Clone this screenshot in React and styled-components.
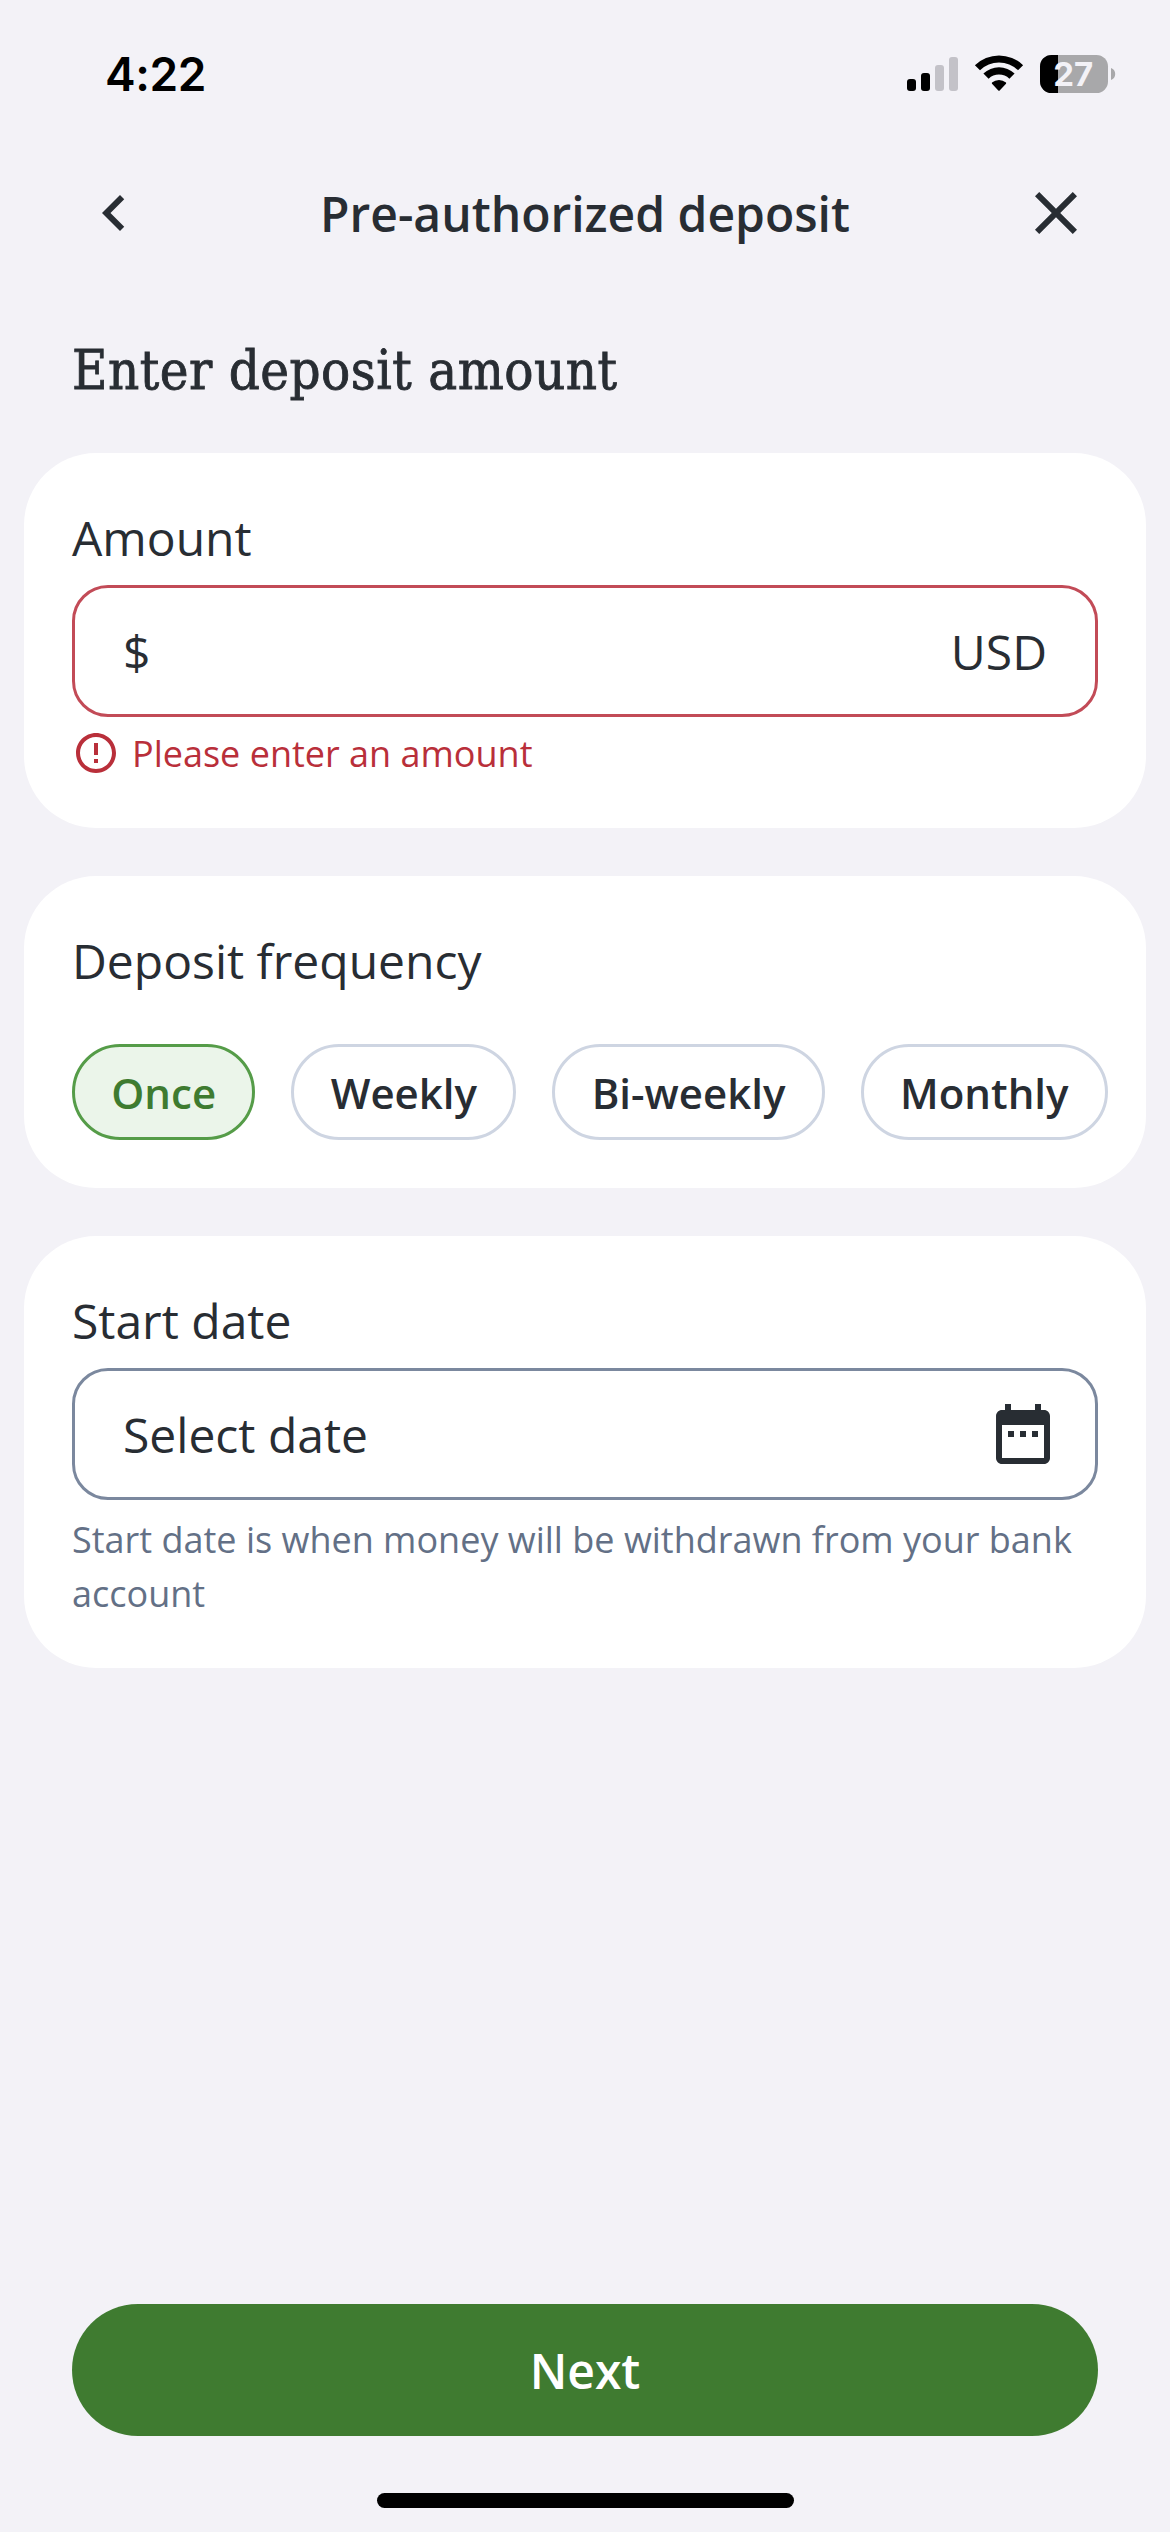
import React, { useState } from "react";
import styled, { createGlobalStyle } from "styled-components";

const GlobalStyle = createGlobalStyle`
  * {
    box-sizing: border-box;
  }
  body {
    margin: 0;
    background-color: #f3f2f7;
  }
  button {
    font-family: inherit;
    margin: 0;
    padding: 0;
    border: none;
    background: none;
    color: inherit;
    cursor: pointer;
  }
`;

const Screen = styled.div`
  width: 1170px;
  height: 2532px;
  display: flex;
  flex-direction: column;
  background-color: #f3f2f7;
  color: #282d33;
  font-family: "Open Sans", sans-serif;
  overflow: hidden;
`;

const StatusBar = styled.div`
  height: 141px;
  padding: 7px 54px 0 105px;
  display: flex;
  align-items: center;
  justify-content: space-between;
  color: #000;
  font-family: Inter, sans-serif;
`;

const Time = styled.span`
  font-size: 46px;
  font-weight: 600;
  letter-spacing: -0.4px;
`;

const StatusIcons = styled.svg`
  display: block;
`;

const NavBar = styled.header`
  height: 144px;
  padding: 0 78px;
  display: flex;
  align-items: center;
  justify-content: space-between;
`;

const IconButton = styled.button`
  width: 72px;
  height: 72px;
`;

const Icon = styled.svg`
  display: block;
  flex-shrink: 0;
  fill: currentColor;
`;

const Title = styled.h1`
  margin: 0;
  padding-top: 2px;
  font-size: 48px;
  line-height: 72px;
  font-weight: 600;
`;

const Content = styled.main`
  flex: 1;
  padding: 50px 24px 0;
  display: flex;
  flex-direction: column;
`;

const Heading = styled.h2`
  margin: 0 0 46px 48px;
  font-family: "Roboto Slab", "DejaVu Serif Condensed", "DejaVu Serif", serif;
  font-stretch: condensed;
  font-size: 54px;
  line-height: 72px;
  font-weight: 400;
  letter-spacing: 0.5px;
  -webkit-text-stroke: 0.8px currentColor;
`;

const Cards = styled.div`
  display: flex;
  flex-direction: column;
  gap: 48px;
`;

const Card = styled.section`
  padding: 49px 48px 48px;
  border-radius: 72px;
  background-color: #fff;
`;

const Label = styled.div`
  margin-bottom: ${(props) => props.$space || 11}px;
  font-size: 48px;
  line-height: 72px;
`;

const Field = styled.div`
  height: 132px;
  padding: 0 ${(props) => (props.$hasIcon ? 36 : 48)}px 0 48px;
  display: flex;
  align-items: center;
  justify-content: space-between;
  border: 3px solid ${(props) => (props.$error ? "#c24b57" : "#7b889e")};
  border-radius: 36px;
  font-size: 48px;
`;

const ErrorMessage = styled.div`
  margin-top: 9px;
  display: flex;
  align-items: center;
  gap: 12px;
  color: #b92f3a;
  font-size: 36px;
  line-height: 54px;
`;

const ErrorText = styled.span`
  padding-top: 1px;
  margin-bottom: -1px;
`;

const HelperText = styled.p`
  margin: 13px 0 -1px;
  color: #637086;
  font-size: 36px;
  line-height: 54px;
`;

const Chips = styled.div`
  display: flex;
  gap: 36px;
  margin-right: -48px;
`;

const Chip = styled.button`
  height: 96px;
  padding: 0 36.3px;
  flex-shrink: 0;
  border: 3px solid ${(props) => (props.$selected ? "#559c48" : "#ced5e2")};
  border-radius: 48px;
  background-color: ${(props) => (props.$selected ? "#ebf5ea" : "#fff")};
  color: ${(props) => (props.$selected ? "#3e7b30" : "#282d33")};
  font-size: 42px;
  font-weight: 600;
`;

const Footer = styled.footer`
  padding: 0 72px 24px;
  display: flex;
  flex-direction: column;
  align-items: center;
  gap: 57px;
`;

const NextButton = styled.button`
  width: 100%;
  height: 132px;
  border-radius: 66px;
  background-color: #3f7b30;
  color: #fff;
  font-size: 48px;
  font-weight: 600;
`;

const HomeIndicator = styled.div`
  width: 417px;
  height: 15px;
  border-radius: 8px;
  background-color: #000;
`;

const frequencies = ["Once", "Weekly", "Bi-weekly", "Monthly"];

const PhoneStatus = () => (
  <StatusIcons width="210" height="40" viewBox="906 54 210 40">
    {/* signal */}
    <rect x="907" y="79" width="9" height="12" rx="3" />
    <rect x="921" y="73" width="9" height="18" rx="3" />
    <rect x="935" y="65" width="9" height="26" rx="3" fill="#c3c2c8" />
    <rect x="949" y="57" width="9" height="34" rx="3" fill="#c3c2c8" />
    {/* wifi */}
    <path d="M974.9 65.2 A34.5 34.5 0 0 1 1023.1 65.2 L1018 70.3 A27.3 27.3 0 0 0 980 70.3 Z" />
    <path d="M983.4 73.6 A22.5 22.5 0 0 1 1014.6 73.6 L1009.4 78.8 A15 15 0 0 0 988.6 78.8 Z" />
    <path d="M992 82.6 A10.5 10.5 0 0 1 1006 82.6 Q1006.4 83.1 1006 83.7 L999.7 90.4 Q999 91 998.3 90.4 L992 83.7 Q991.6 83.1 992 82.6 Z" />
    {/* battery */}
    <rect x="1040" y="55" width="68" height="38" rx="11.5" fill="#a8a8aa" />
    <path d="M1051.5 55 H1058 V93 H1051.5 A11.5 11.5 0 0 1 1040 81.5 V66.5 A11.5 11.5 0 0 1 1051.5 55 Z" />
    <path d="M1111 68 A6.4 6.4 0 0 1 1111 80 Z" fill="#a8a8aa" />
    <text
      x="1073.3"
      y="86"
      textAnchor="middle"
      fill="#f3f2f7"
      fontSize="33"
      fontWeight="700"
    >
      27
    </text>
  </StatusIcons>
);

const App = () => {
  const [frequency, setFrequency] = useState("Once");

  return (
    <Screen>
      <GlobalStyle />
      <StatusBar>
        <Time>4:22</Time>
        <PhoneStatus />
      </StatusBar>
      <NavBar>
        <IconButton aria-label="Back">
          <Icon width="72" height="72" viewBox="0 0 24 24">
            <path d="M15.41 7.41 14 6l-6 6 6 6 1.41-1.41L10.83 12z" />
          </Icon>
        </IconButton>
        <Title>Pre-authorized deposit</Title>
        <IconButton aria-label="Close">
          <Icon width="72" height="72" viewBox="0 0 24 24">
            <path d="M19 6.41 17.59 5 12 10.59 6.41 5 5 6.41 10.59 12 5 17.59 6.41 19 12 13.41 17.59 19 19 17.59 13.41 12z" />
          </Icon>
        </IconButton>
      </NavBar>
      <Content>
        <Heading>Enter deposit amount</Heading>
        <Cards>
          <Card>
            <Label>Amount</Label>
            <Field $error>
              <span>$</span>
              <span>USD</span>
            </Field>
            <ErrorMessage>
              <Icon width="48" height="48" viewBox="0 0 24 24">
                <path d="M11 15h2v2h-2zm0-8h2v6h-2zm.99-5C6.47 2 2 6.48 2 12s4.47 10 9.99 10C17.52 22 22 17.52 22 12S17.52 2 11.99 2M12 20c-4.42 0-8-3.58-8-8s3.58-8 8-8 8 3.58 8 8-3.58 8-8 8" />
              </Icon>
              <ErrorText>Please enter an amount</ErrorText>
            </ErrorMessage>
          </Card>
          <Card>
            <Label $space={47}>Deposit frequency</Label>
            <Chips>
              {frequencies.map((item) => (
                <Chip
                  key={item}
                  $selected={item === frequency}
                  onClick={() => setFrequency(item)}
                >
                  {item}
                </Chip>
              ))}
            </Chips>
          </Card>
          <Card>
            <Label>Start date</Label>
            <Field $hasIcon>
              <span>Select date</span>
              <Icon width="72" height="72" viewBox="0 0 24 24">
                <path d="M9 11H7v2h2zm4 0h-2v2h2zm4 0h-2v2h2zm2-7h-1V2h-2v2H8V2H6v2H5c-1.11 0-1.99.9-1.99 2L3 20c0 1.1.89 2 2 2h14c1.1 0 2-.9 2-2V6c0-1.1-.9-2-2-2m0 16H5V9h14z" />
              </Icon>
            </Field>
            <HelperText>
              Start date is when money will be withdrawn from your bank account
            </HelperText>
          </Card>
        </Cards>
      </Content>
      <Footer>
        <NextButton>Next</NextButton>
        <HomeIndicator />
      </Footer>
    </Screen>
  );
};

export default App;
